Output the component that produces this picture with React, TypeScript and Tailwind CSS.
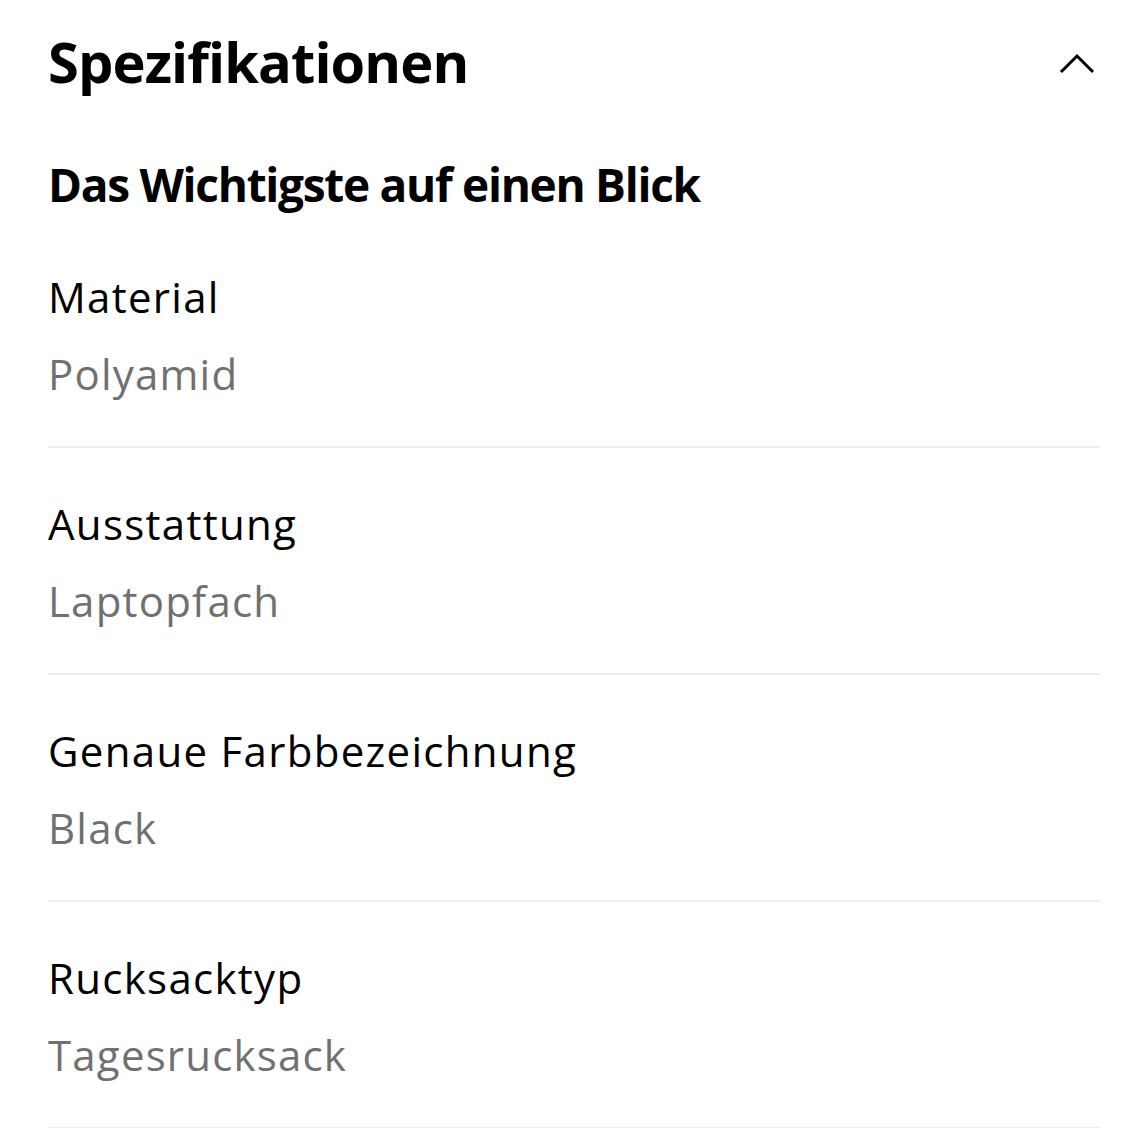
import React from "react";

const SPECS: { label: string; value: string }[] = [
  { label: "Material", value: "Polyamid" },
  { label: "Ausstattung", value: "Laptopfach" },
  { label: "Genaue Farbbezeichnung", value: "Black" },
  { label: "Rucksacktyp", value: "Tagesrucksack" },
];

export default function App() {
  return (
    <div className="min-h-screen bg-white text-black font-['Open_Sans',sans-serif] pl-[48px] pr-[28px] [font-variant-ligatures:none]">
      <div className="flex items-center justify-between pt-[27px] pr-[4px]">
        <h1 className="text-[56px] leading-[68px] font-bold tracking-[-0.9px]">Spezifikationen</h1>
        <svg width="38" height="24" viewBox="0 0 38 24" className="mt-[6px]">
          <polyline points="3,20 19,4 35,20" fill="none" stroke="#000" strokeWidth="3" />
        </svg>
      </div>
      <h2 className="mt-[61px] text-[46px] leading-[56px] font-bold tracking-[-1.3px]">
        Das Wichtigste auf einen Blick
      </h2>
      <div className="mt-[57px]">
        {SPECS.map((s, i) => (
          <div
            key={s.label}
            className={`border-b-2 border-[#eeeeee] pb-[44px] ${i === 0 ? "" : "pt-[48px]"}`}
          >
            <div className="text-[42px] leading-[56px] tracking-[1.3px]">{s.label}</div>
            <div className="mt-[21px] text-[42px] leading-[56px] tracking-[1.2px] text-[#707070]">{s.value}</div>
          </div>
        ))}
      </div>
    </div>
  );
}
